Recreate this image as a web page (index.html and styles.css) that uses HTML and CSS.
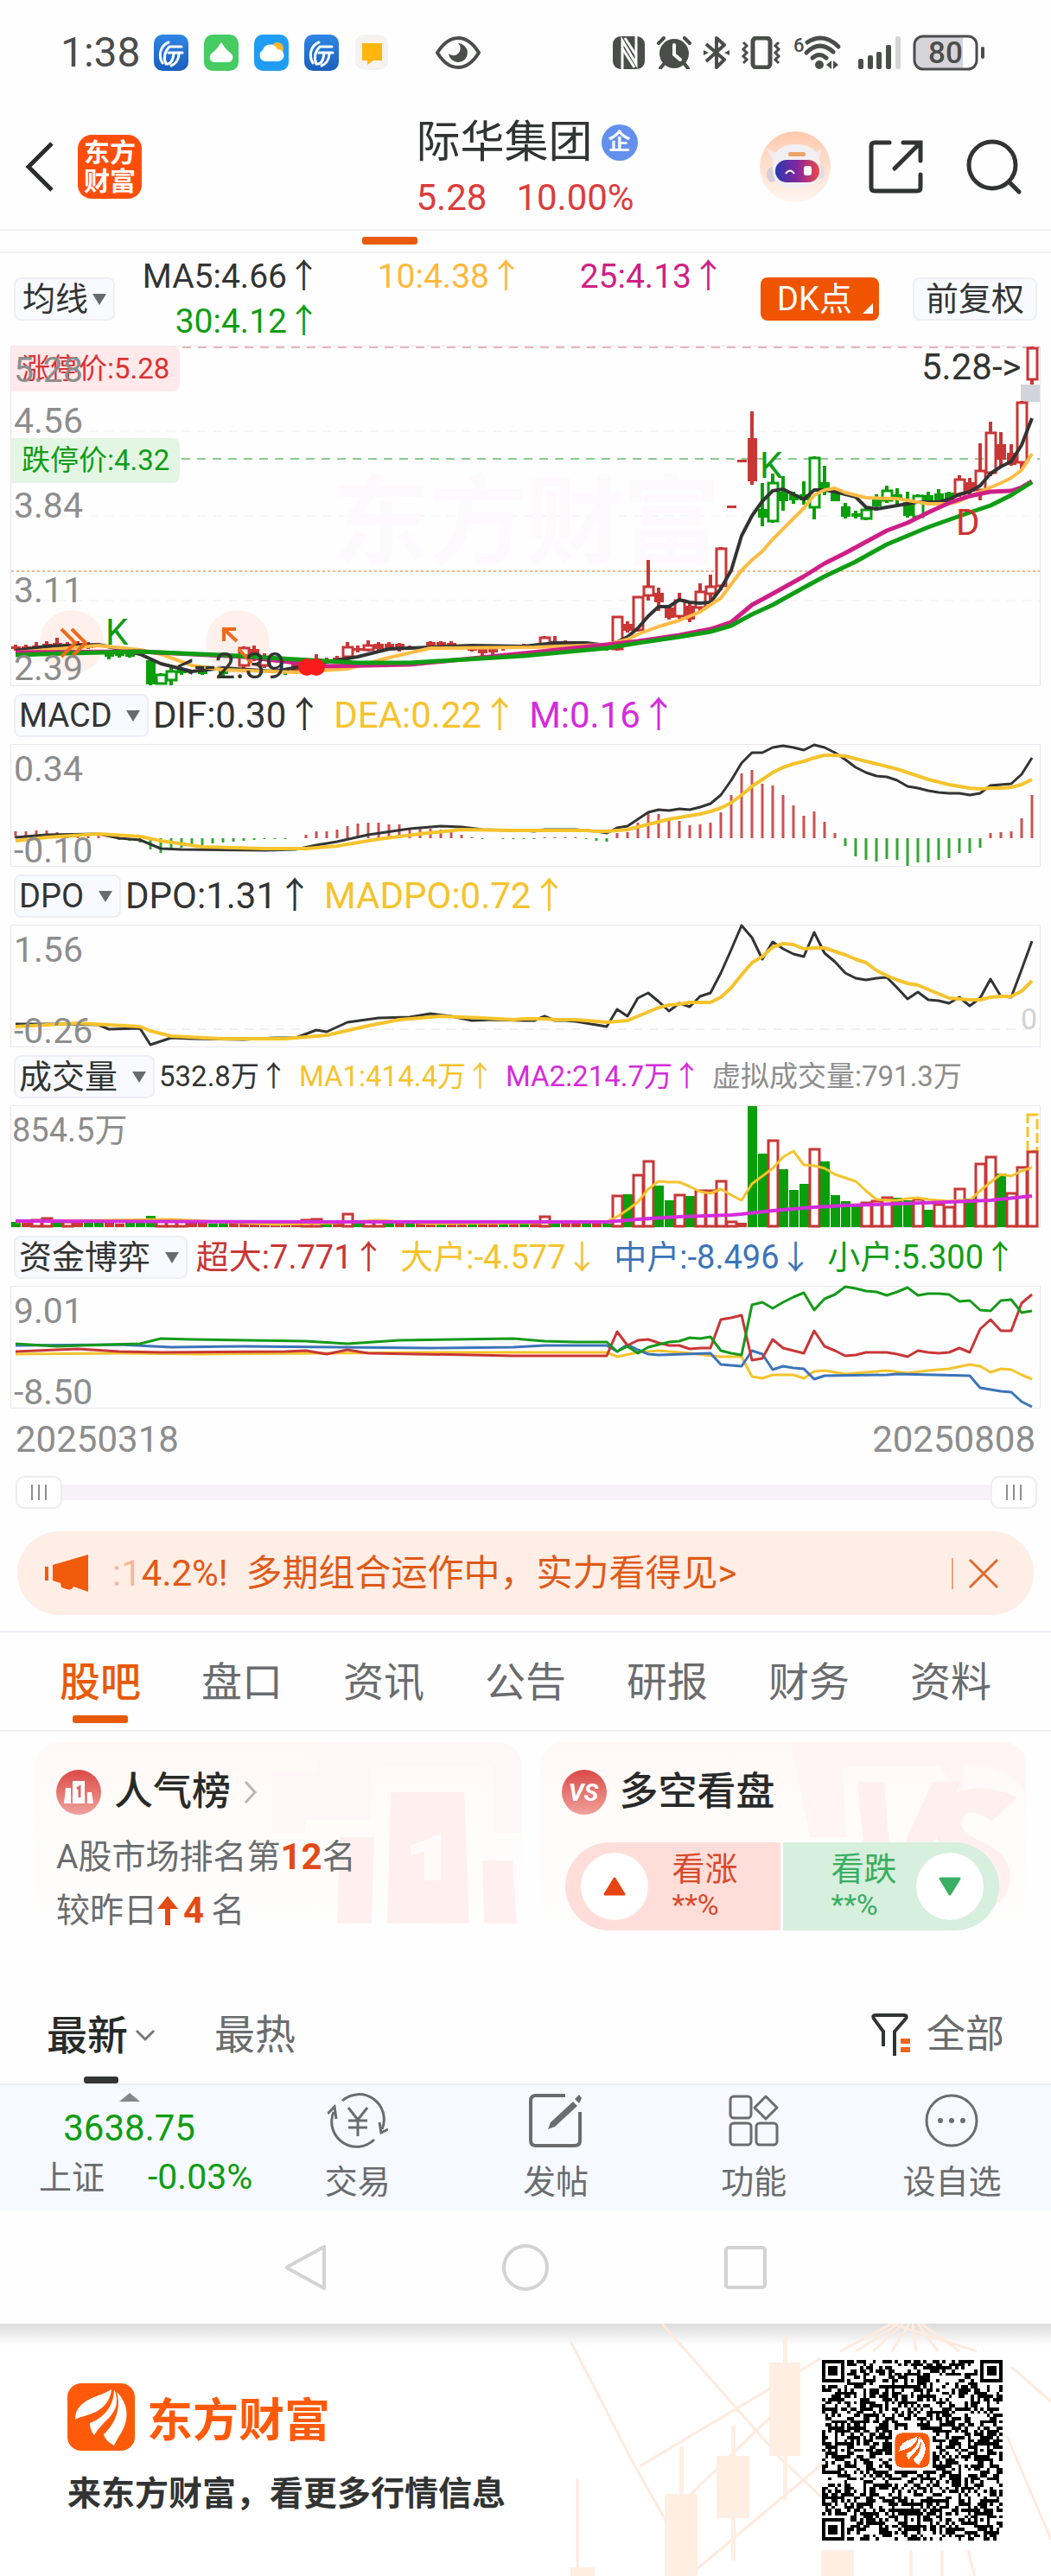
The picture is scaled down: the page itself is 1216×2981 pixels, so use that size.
FILE: index.html
```html
<!DOCTYPE html>
<html lang="zh-CN">
<head>
    <meta charset="UTF-8">
    <meta name="viewport" content="width=device-width, initial-scale=1.0">
    <title>际华集团 5.28 10.00%</title>
    <link rel="stylesheet" href="styles.css">
</head>
<body>

    <!-- shared logo mark -->
    <svg class="defs" width="0" height="0">
        <symbol id="logo" viewBox="0 0 78 78">
            <rect width="78" height="78" rx="16" fill="#ff5a0a"/>
            <path fill="#fff" d="M9 42C9 26 22 19 36 14C44 11 50 8 51 7C50 18 44 27 33 33C22 38 13 39 9 42Z"/>
            <path fill="#fff" d="M54 7C60 20 57 32 46 42C40 48 35 53 31 60C27 55 26 50 26 46C40 41 54 28 54 7Z"/>
            <path fill="#fff" d="M57 10C66 19 70 30 68 42C66 54 59 61 54 72C47 68 43 64 42 59C54 48 63 30 57 10Z"/>
        </symbol>
        <symbol id="bank" viewBox="0 0 40 42">
            <linearGradient id="bankBg" x1="0" y1="0" x2="0" y2="1"><stop offset="0" stop-color="#2f86e4"/><stop offset="1" stop-color="#1a5fbd"/></linearGradient>
            <rect width="40" height="42" rx="10" fill="url(#bankBg)"/>
            <g fill="none" stroke="#fff" stroke-width="3" stroke-linecap="round">
                <path d="M17 9C7 13 5 25 10 33"/><path d="M19 14H32"/><path d="M17 21H33"/><path d="M18 14C12 20 11 28 14 34C20 35 22 29 23 22"/><path d="M29 22C29 29 25 34 20 36"/>
            </g>
        </symbol>
    </svg>

    <div class="status">
        <span class="clock">1:38</span>
        <svg width="40" height="42"><use href="#bank"/></svg>
        <svg width="40" height="42" viewBox="0 0 40 42"><rect width="40" height="42" rx="10" fill="#46cc62"/><path fill="#fff" d="M20 9C23 13 25 17 29 20C36 24 34 32 27 32H13C6 32 4 24 11 20C15 17 17 13 20 9Z"/></svg>
        <svg width="40" height="42" viewBox="0 0 40 42"><rect width="40" height="42" rx="10" fill="#1f9df5"/><circle cx="27" cy="16" r="7" fill="#ffb62b"/><path fill="#fff" d="M13 31A7 7 0 0 1 10 18A9 9 0 0 1 27 17A7 7 0 0 1 28 31Z"/></svg>
        <svg width="40" height="42"><use href="#bank"/></svg>
        <svg width="40" height="42" viewBox="0 0 40 42"><rect width="38" height="41" x="1" rx="10" fill="#f6f2f2"/><path fill="#ffb60f" d="M9 10H32V30H22L15 35V30H9Z"/></svg>
        <svg class="eye" width="52" height="38" viewBox="0 0 52 38"><path d="M2 19C10 6 18 2 26 2S42 6 50 19C42 32 34 36 26 36S10 32 2 19Z" fill="none" stroke="#4b4d4b" stroke-width="4"/><path d="M26 8A11 11 0 1 1 15 20A8 8 0 0 0 26 8Z" fill="#4b4d4b"/></svg>
        <div class="status-right">
            <svg width="37" height="38" viewBox="0 0 37 38"><rect width="37" height="38" rx="9" fill="#4b4d4b"/><path d="M11 38V5L27 32V0" fill="none" stroke="#fff" stroke-width="3"/><path d="M11 14L25 36" stroke="#fff" stroke-width="3"/><path d="M14 2L27 22" stroke="#fff" stroke-width="3"/></svg>
            <svg width="42" height="38" viewBox="0 0 42 38"><circle cx="21" cy="20" r="17" fill="#4b4d4b"/><path d="M3 8L9 2M39 8L33 2M9 32L5 37M33 32L37 37" stroke="#4b4d4b" stroke-width="4" stroke-linecap="round"/><path d="M21 10V21L28 27" fill="none" stroke="#fff" stroke-width="4" stroke-linecap="round"/></svg>
            <svg width="30" height="38" viewBox="0 0 30 38"><path d="M3 9L24 27L15 36V2L24 10L3 29" fill="none" stroke="#4b4d4b" stroke-width="4" stroke-linejoin="round"/><path d="M0 16L6 19L0 22ZM30 16L24 19L30 22Z" fill="#4b4d4b"/></svg>
            <svg width="48" height="38" viewBox="0 0 48 38"><g fill="none" stroke="#4b4d4b"><rect x="14" y="2" width="20" height="34" rx="4" stroke-width="5"/><path d="M3 7L7 11L3 15L7 19L3 23L7 27L3 31M44 7L40 11L44 15L40 19L44 23L40 27L44 31" stroke-width="3"/></g></svg>
            <svg class="wifi" width="56" height="42" viewBox="0 0 56 42"><text x="0" y="20" font-size="22" font-weight="500" fill="#4b4d4b">6</text><g fill="none" stroke="#4b4d4b" stroke-width="5" stroke-linecap="round"><path d="M16 9Q35 -3 52 14"/><path d="M15 21Q30 6 46 20"/><path d="M22 27Q30 20 38 27"/></g><circle cx="30" cy="35" r="5" fill="#4b4d4b"/><path d="M44 30V40L38 35ZM46 30V40L52 35Z" fill="#4b4d4b"/></svg>
            <svg class="signal" width="50" height="38" viewBox="0 0 50 38"><g fill="#4b4d4b"><rect y="26" width="6" height="12" rx="2"/><rect x="11" y="22" width="6" height="16" rx="2"/><rect x="21" y="18" width="6" height="20" rx="2"/><rect x="32" y="10" width="6" height="28" rx="2"/></g><rect x="43" width="6" height="38" rx="2" fill="#d6d2d6"/></svg>
            <svg width="84" height="42" viewBox="0 0 84 42"><rect x="2" y="2" width="72" height="38" rx="10" fill="#fff"/><path d="M12 2H58V40H12A10 10 0 0 1 2 30V12A10 10 0 0 1 12 2Z" fill="#d6d4d8"/><rect x="2" y="2" width="72" height="38" rx="10" fill="none" stroke="#4b4d4b" stroke-width="3"/><rect x="79" y="14" width="4" height="14" rx="2" fill="#4b4d4b"/><text x="38" y="33" font-size="35" font-weight="500" text-anchor="middle" fill="#4b4d4b">80</text></svg>
        </div>
    </div>

    <header class="topbar">
        <div class="top-left">
            <button class="icon-btn" aria-label="返回"><svg width="36" height="62" viewBox="0 0 36 62"><path d="M32 4L5 31L32 58" fill="none" stroke="#2b2d2c" stroke-width="5"/></svg></button>
            <a class="brand" href="#">东方<br>财富</a>
        </div>
        <div class="stock">
            <h1>际华集团<span class="badge">企</span></h1>
            <p><span>5.28</span><span>10.00%</span></p>
        </div>
        <div class="top-right">
            <button class="icon-btn" aria-label="助手">
                <svg width="82" height="82" viewBox="0 0 82 82">
                    <linearGradient id="botBg" x1="0" y1="0" x2="0" y2="1"><stop offset="0" stop-color="#ffc9ad"/><stop offset="1" stop-color="#fff6f1"/></linearGradient>
                    <linearGradient id="visor"><stop offset="0" stop-color="#2b39b0"/><stop offset=".5" stop-color="#84269c"/><stop offset="1" stop-color="#ec4848"/></linearGradient>
                    <circle cx="41" cy="41" r="41" fill="url(#botBg)"/>
                    <path d="M15 34L8 20L22 26ZM62 26L72 20L68 34Z" fill="#f3eaf0"/>
                    <ellipse cx="14" cy="50" rx="6" ry="9" fill="#d8cfd6"/><ellipse cx="71" cy="47" rx="4" ry="8" fill="#e5dbe2"/>
                    <path d="M15 42C14 22 26 15 42 15S70 22 70 40C72 58 62 66 42 66S15 58 15 42Z" fill="#f2eff2"/>
                    <rect x="33" y="24" width="20" height="5" rx="2" fill="#eaa468"/>
                    <rect x="18" y="33" width="51" height="26" rx="13" fill="url(#visor)"/>
                    <path d="M30 49Q35 42 40 49" fill="none" stroke="#fff" stroke-width="2"/><rect x="51" y="40" width="9" height="11" rx="3" fill="#fff"/>
                </svg>
            </button>
            <button class="icon-btn" aria-label="分享"><svg width="64" height="64" viewBox="0 0 64 64"><g fill="none" stroke="#323433" stroke-width="5" stroke-linecap="round"><path d="M24 4H7Q3 4 3 8V56Q3 60 7 60H56Q60 60 60 56V41"/><path d="M40 4H60V25M59 5L30 34"/></g></svg></button>
            <button class="icon-btn search" aria-label="搜索"><svg width="66" height="66" viewBox="0 0 66 66"><g fill="none" stroke="#323433" stroke-width="5" stroke-linecap="round"><circle cx="31" cy="31" r="27"/><path d="M51 51L62 62"/></g></svg></button>
        </div>
    </header>
    <div class="strip"><i></i></div>

    <main class="charts">
        <div class="ma-row">
            <div class="pick pick-tight"><select aria-label="指标"><option>均线</option></select></div>
            <div class="ma-values">
                <span class="c-black">MA5:4.66↑</span>
                <span class="c-orange">10:4.38↑</span>
                <span class="c-pink">25:4.13↑</span>
                <span class="c-green">30:4.12↑</span>
            </div>
            <button class="dk">DK点</button>
            <button class="adjust">前复权</button>
        </div>

        <div class="chart">
            <svg viewBox="0 0 1190 392">
                <g stroke="#f1edf3" stroke-dasharray="10 8"><path d="M0 98H1190M0 196H1190M0 294H1190"/></g>
                <text x="372" y="243" font-size="112" font-weight="700" fill="#fdf9fd">东方财富</text>
                <path d="M0 1H1190" stroke="#e7b6be" stroke-width="2" stroke-dasharray="10 8"/>
                <path d="M197 130H1190" stroke="#8acb8f" stroke-width="2" stroke-dasharray="10 8"/>
                <path d="M0 260H1190" stroke="#eeb892" stroke-width="2" stroke-dasharray="3 3"/>
                <circle cx="70" cy="342" r="37" fill="#fff0eb"/>
                <circle cx="262" cy="342" r="37" fill="#fff0eb"/>
                <rect x="1168" y="44" width="22" height="20" fill="#d3d3dc"/>
                <g id="candles"></g>
                <g id="kLines"></g>
                <g fill="none" stroke="#ef6a1c" stroke-width="4"><path d="M58 327L74 343L58 359M70 327L86 343L70 359"/><path d="M246 341V327H260M247 328L261 341M263 350L278 366"/></g>
                <circle cx="342" cy="371" r="10" fill="#f81c1c"/><circle cx="353" cy="371" r="10" fill="#f81c1c"/>
                <g font-size="42">
                    <text x="109" y="345" fill="#0f9d14">K</text>
                    <text x="866" y="152" fill="#0f9d14">K</text>
                    <text x="1093" y="218" fill="#cf3232">D</text>
                    <text x="1053" y="38" fill="#323433">5.28-&gt;</text>
                    <text x="191" y="384" fill="#323433">&lt;--2.39</text>
                </g>
            </svg>
            <span class="limit limit-up">涨停价:5.28</span>
            <span class="limit limit-down">跌停价:4.32</span>
            <div class="scale price-scale"><span>5.28</span><span>4.56</span><span>3.84</span><span>3.11</span><span>2.39</span></div>
        </div>

        <div class="ind-row">
            <div class="pick"><select aria-label="副图一"><option>MACD</option></select></div>
            <span class="c-black">DIF:0.30↑</span>
            <span class="c-yellow">DEA:0.22↑</span>
            <span class="c-violet">M:0.16↑</span>
        </div>
        <div class="chart">
            <svg viewBox="0 0 1190 140"><g id="macd"></g></svg>
            <div class="scale"><span>0.34</span><span>-0.10</span></div>
        </div>

        <div class="ind-row">
            <div class="pick"><select aria-label="副图二"><option>DPO</option></select></div>
            <span class="c-black">DPO:1.31↑</span>
            <span class="c-yellow">MADPO:0.72↑</span>
        </div>
        <div class="chart">
            <svg viewBox="0 0 1190 140">
                <path d="M0 120H1190" stroke="#e6e0e4" stroke-dasharray="10 8"/>
                <g id="dpo"></g>
                <text x="1168" y="120" font-size="34" fill="#d3d1d4">0</text>
            </svg>
            <div class="scale"><span>1.56</span><span>-0.26</span></div>
        </div>

        <div class="ind-row volume-row">
            <div class="pick"><select aria-label="副图三"><option>成交量</option></select></div>
            <span class="c-black">532.8万↑</span>
            <span class="c-yellow">MA1:414.4万↑</span>
            <span class="c-violet">MA2:214.7万↑</span>
            <span class="c-grey">虚拟成交量:791.3万</span>
        </div>
        <div class="chart">
            <svg viewBox="0 0 1190 140"><g id="volume"></g></svg>
            <div class="scale volume-scale"><span>854.5万</span></div>
        </div>

        <div class="ind-row fund-row">
            <div class="pick"><select aria-label="副图四"><option>资金博弈</option></select></div>
            <span class="c-red">超大:7.771↑</span>
            <span class="c-yellow">大户:-4.577↓</span>
            <span class="c-blue">中户:-8.496↓</span>
            <span class="c-green">小户:5.300↑</span>
        </div>
        <div class="chart">
            <svg viewBox="0 0 1190 140"><g id="fund"></g></svg>
            <div class="scale"><span>9.01</span><span>-8.50</span></div>
        </div>

        <div class="dates"><span>20250318</span><span>20250808</span></div>
        <div class="range">
            <input type="range" min="0" max="98" value="0" aria-label="开始日期">
            <input type="range" min="0" max="98" value="98" aria-label="结束日期">
        </div>
    </main>

    <div class="notice">
        <svg width="52" height="44" viewBox="0 0 52 44"><path d="M2 14V30" stroke="#f25a0c" stroke-width="4"/><path d="M9 12L50 0V43L33 37Q31 42 25 40L19 38L18 33L9 30Z" fill="#f25a0c"/></svg>
        <a href="#"><span class="fade">:1</span>4.2%!&nbsp; 多期组合运作中，实力看得见&gt;</a>
        <button class="icon-btn" aria-label="关闭"><svg width="36" height="36" viewBox="0 0 36 36"><path d="M2 2L34 34M34 2L2 34" stroke="#e06a2c" stroke-width="3"/></svg></button>
    </div>

    <nav class="tabs">
        <a class="active" href="#">股吧</a>
        <a href="#">盘口</a>
        <a href="#">资讯</a>
        <a href="#">公告</a>
        <a href="#">研报</a>
        <a href="#">财务</a>
        <a href="#">资料</a>
    </nav>

    <section class="cards">
        <div class="card">
            <svg class="card-art" width="320" height="210" viewBox="0 0 320 210">
                <path d="M32 34H84V0H290Q320 0 320 30V105H288V27H146V90H70V105H32Z" fill="#fff6f7"/>
                <g fill="#fff0ef"><path d="M110 110H150L147 210H107Z"/><path d="M169 58H254L260 210H165Z"/><path d="M275 137H310L315 210H277Z"/></g>
                <path d="M192 120L227 106V160H208V126L192 132Z" fill="#fffafa"/>
            </svg>
            <h2>
                <svg width="52" height="52" viewBox="0 0 52 52">
                    <linearGradient id="redBg" x1="0" y1="0" x2="0" y2="1"><stop offset="0" stop-color="#dc4a46"/><stop offset="1" stop-color="#f0a19c"/></linearGradient>
                    <circle cx="26" cy="26" r="26" fill="url(#redBg)"/>
                    <path d="M11 21H17V39H9ZM19 13H33V39H19ZM36 26H41L43 39H36Z" fill="#fff"/><path d="M24 22L27 20V32" fill="none" stroke="#dc6864" stroke-width="3"/>
                </svg>
                人气榜
                <svg width="16" height="28" viewBox="0 0 16 28"><path d="M2 2L13 14L2 26" fill="none" stroke="#b9b7b6" stroke-width="3"/></svg>
            </h2>
            <p>A股市场排名第<b>12</b>名</p>
            <p>较昨日<svg width="24" height="34" viewBox="0 0 24 34"><path d="M12 0L24 15H15V34H9V15H0Z" fill="#e24a16"/></svg><b class="up">4</b>名</p>
        </div>
        <div class="card">
            <svg class="card-art" width="320" height="210" viewBox="0 0 320 210">
                <path d="M48 0H290Q320 0 320 30V60Q295 20 250 28L245 60L220 28H108L112 110H70Z" fill="#fff5f4"/>
                <path d="M125 46H156L164 150L212 46H245L175 200H140ZM310 64L280 92Q252 70 245 92Q245 106 275 118Q312 138 298 175Q275 210 220 190L232 160Q262 178 268 158Q268 148 240 135Q206 118 218 80Q245 36 310 64Z" fill="#fff0ef"/>
            </svg>
            <h2>
                <svg width="52" height="52" viewBox="0 0 52 52"><circle cx="26" cy="26" r="26" fill="url(#redBg)"/><text x="25" y="36" font-size="28" font-weight="700" font-style="italic" text-anchor="middle" fill="#fff">VS</text></svg>
                多空看盘
            </h2>
            <div class="vote">
                <button class="bull">
                    <span class="dot"><svg width="26" height="22" viewBox="0 0 26 22"><path d="M13 2L24 20H2Z" fill="#e54512" stroke="#e54512" stroke-width="3" stroke-linejoin="round"/></svg></span>
                    <span>看涨<br><small>**%</small></span>
                </button>
                <button class="bear">
                    <span>看跌<br><small>**%</small></span>
                    <span class="dot"><svg width="26" height="22" viewBox="0 0 26 22"><path d="M13 20L24 2H2Z" fill="#3aae62" stroke="#3aae62" stroke-width="3" stroke-linejoin="round"/></svg></span>
                </button>
            </div>
        </div>
    </section>

    <div class="sort">
        <a class="active" href="#">最新<svg width="24" height="16" viewBox="0 0 24 16"><path d="M2 2L12 12L22 2" fill="none" stroke="#777" stroke-width="3"/></svg></a>
        <a href="#">最热</a>
        <button class="filter">
            <svg width="48" height="52" viewBox="0 0 48 52"><path d="M14 39V22L3 7Q1 3 5 3H38Q42 3 40 7L27 22V50" fill="none" stroke="#323433" stroke-width="4"/><path d="M34 33H45M34 43H45" stroke="#f0631c" stroke-width="6"/></svg>
            全部
        </button>
    </div>

    <nav class="bottom">
        <a class="index" href="#">
            <svg width="24" height="10" viewBox="0 0 24 10"><path d="M12 0L24 10H0Z" fill="#85868a"/></svg>
            <strong>3638.75</strong>
            <span>上证<em>-0.03%</em></span>
        </a>
        <a href="#">
            <svg width="70" height="64" viewBox="0 0 70 64"><g fill="none" stroke="#6a6c6e" stroke-width="3"><path d="M17 9A29 29 0 0 1 63 42M54 54A29 29 0 0 1 7 22"/><path d="M0 24L8 16L10 30M70 42L62 46L60 34M24 17L35 31L46 17M35 31V50M24 32H46M24 40H46"/></g></svg>
            交易
        </a>
        <a href="#">
            <svg width="62" height="64" viewBox="0 0 62 64"><g fill="none" stroke="#6a6c6e" stroke-width="4"><path d="M42 3H8Q2 3 2 9V55Q2 61 8 61H53Q59 61 59 55V22"/></g><path d="M51 10L56 15L30 39L22 42L25 34ZM53 7L58 2L61 6L58 12Z" fill="#6a6c6e"/></svg>
            发帖
        </a>
        <a href="#">
            <svg width="60" height="64" viewBox="0 0 60 64"><g fill="none" stroke="#6a6c6e" stroke-width="3"><rect x="3" y="4" width="24" height="25" rx="4"/><rect x="3" y="35" width="24" height="25" rx="4"/><rect x="33" y="35" width="24" height="25" rx="4"/><path d="M44 4L57 17L44 30L31 17Z" stroke-linejoin="round"/></g></svg>
            功能
        </a>
        <a href="#">
            <svg width="64" height="64" viewBox="0 0 64 64"><circle cx="32" cy="32" r="29" fill="none" stroke="#6a6c6e" stroke-width="3"/><g fill="#6a6c6e"><circle cx="19" cy="32" r="3"/><circle cx="32" cy="32" r="3"/><circle cx="45" cy="32" r="3"/></g></svg>
            设自选
        </a>
    </nav>

    <div class="system-nav">
        <button class="icon-btn" aria-label="后退"><svg width="52" height="56" viewBox="0 0 52 56"><path d="M47 4V52L5 29Q3 28 5 27Z" fill="none" stroke="#d4d2d4" stroke-width="4" stroke-linejoin="round"/></svg></button>
        <button class="icon-btn" aria-label="主页"><svg width="56" height="56" viewBox="0 0 56 56"><circle cx="28" cy="28" r="25" fill="none" stroke="#d4d2d4" stroke-width="4"/></svg></button>
        <button class="icon-btn" aria-label="最近"><svg width="52" height="56" viewBox="0 0 52 56"><rect x="4" y="5" width="45" height="46" rx="3" fill="none" stroke="#d4d2d4" stroke-width="4"/></svg></button>
    </div>

    <footer class="promo">
        <svg class="promo-art" width="556" height="293" viewBox="0 0 556 293">
            <g fill="none" stroke="#ffeadd" stroke-width="3"><path d="M106 0L245 158L290 200M0 20L72 160L108 224M80 165L290 40M108 228L260 80M145 285L330 130M8 293V180M312 32L372 0L470 32M330 32L380 0M350 32L385 0M372 32L392 0M400 32L396 0M425 32L402 0M450 32L406 0M510 50L556 90M505 130L556 250M394 262V293M430 262V293M460 262L468 293"/></g>
            <g fill="#ffeee2"><rect x="230" y="45" width="36" height="108"/><rect x="246" y="14" width="5" height="190"/><rect x="169" y="153" width="38" height="72"/><rect x="186" y="118" width="5" height="156"/><rect x="109" y="197" width="38" height="96"/><rect x="126" y="142" width="5" height="60"/><rect x="290" y="262" width="38" height="31"/><rect y="282" width="28" height="11"/></g>
        </svg>
        <div class="promo-text">
            <div class="promo-brand"><svg width="78" height="78"><use href="#logo"/></svg>东方财富</div>
            <p>来东方财富，看更多行情信息</p>
        </div>
        <svg class="qr" viewBox="0 0 57 57" shape-rendering="crispEdges">
            <rect width="57" height="57" fill="#fff"/>
            <path id="qr" fill="#000"/>
            <rect x="22" y="22" width="13" height="13" fill="#fff"/>
            <use href="#logo" x="23" y="23" width="11" height="11"/>
        </svg>
    </footer>

    <script src="script.js"></script>
</body>
</html>
```
FILE: styles.css
```css
* {
    box-sizing: border-box;
}

body {
    margin: 0;
    background-color: #fefefe;
    color: #323433;
    font-family: Roboto, "Noto Sans CJK SC", sans-serif;
    font-size: 38px;
}

h1, h2, p {
    margin: 0;
    font-weight: 400;
}

a {
    color: inherit;
    text-decoration: none;
}

button, select {
    border: none;
    padding: 0;
    background: none;
    color: inherit;
    font: inherit;
    cursor: pointer;
}

svg {
    display: block;
    flex: none;
}

.defs {
    position: absolute;
}

.icon-btn {
    display: flex;
}

/* colours of the indicator values */
.c-black { color: #323433; }
.c-orange { color: #ffb83c; }
.c-yellow { color: #f5c32c; }
.c-pink { color: #cf1f86; }
.c-violet { color: #d42bdc; }
.c-green { color: #0f9d14; }
.c-red { color: #c93636; }
.c-blue { color: #3b74b9; }
.c-grey { color: #8d8d8d; }

/* phone status bar */
.status {
    display: flex;
    align-items: center;
    gap: 18px;
    padding: 36px 76px 34px 70px;
}

.clock {
    color: #4b4d4b;
    font-size: 48px;
    line-height: 50px;
    margin-right: -3px;
}

.eye {
    margin-left: 36px;
}

.status-right {
    display: flex;
    align-items: center;
    gap: 13px;
    margin-left: auto;
}

.wifi {
    overflow: visible;
}

.signal {
    margin-left: 6px;
}

/* title bar */
.topbar {
    display: grid;
    grid-template-columns: 1fr auto 1fr;
    align-items: center;
    padding: 15px 33px 14px 28px;
    border-bottom: 2px solid #f0f0f5;
}

.top-left, .top-right {
    display: flex;
    align-items: center;
    gap: 26px;
}

.top-right {
    justify-content: flex-end;
    gap: 44px;
}

.search {
    margin-left: 4px;
}

.brand {
    width: 74px;
    height: 74px;
    padding-top: 4px;
    border-radius: 16px;
    background-color: #ff4e0c;
    color: #fff;
    font-size: 30px;
    font-weight: 700;
    line-height: 33px;
    text-align: center;
}

.stock {
    display: flex;
    flex-direction: column;
    gap: 12px;
    margin-left: 8px;
}

.stock h1 {
    display: flex;
    align-items: center;
    gap: 10px;
    font-size: 51px;
    line-height: 60px;
}

.badge {
    width: 42px;
    height: 42px;
    border-radius: 50%;
    background-color: #6290ec;
    color: #fff;
    font-size: 26px;
    font-weight: 700;
    line-height: 40px;
    text-align: center;
}

.stock p {
    display: flex;
    gap: 34px;
    color: #dc3c3c;
    font-size: 42px;
    line-height: 44px;
}

.strip {
    padding: 7px 0 8px;
    border-bottom: 2px solid #f0f0f5;
}

.strip i {
    display: block;
    width: 64px;
    height: 9px;
    margin-left: 419px;
    border-radius: 3px;
    background-color: #e85a0a;
}

/* charts */
.charts {
    padding: 0 12px;
}

.ma-row {
    display: flex;
    align-items: center;
    padding: 1px 4px 2px;
}

.pick {
    position: relative;
}

.pick::after {
    content: "";
    position: absolute;
    right: 10px;
    top: 19px;
    border: 8px solid transparent;
    border-top: 13px solid #696b6b;
    border-bottom: none;
    pointer-events: none;
}

.pick select {
    appearance: none;
    height: 50px;
    padding: 0 40px 0 4px;
    border: 2px solid #eeeef6;
    border-radius: 8px;
    background-color: #f8faff;
    line-height: 46px;
}

.pick-tight select {
    padding: 0 28px 0 8px;
}

.ma-values {
    display: grid;
    grid-template-columns: repeat(3, 234px);
    margin-left: 4px;
    font-size: 39px;
    line-height: 52px;
    text-align: right;
}

.dk, .adjust {
    height: 50px;
    border-radius: 8px;
    line-height: 46px;
}

.dk {
    position: relative;
    width: 137px;
    margin-left: auto;
    padding-right: 12px;
    background-color: #f05400;
    color: #fff;
}

.dk::after {
    content: "";
    position: absolute;
    right: 7px;
    bottom: 8px;
    border-left: 12px solid transparent;
    border-bottom: 12px solid #fff;
}

.adjust {
    width: 144px;
    margin-left: 39px;
    border: 2px solid #eeeef6;
    background-color: #f8faff;
}

.chart {
    position: relative;
    border: 1px solid #ebe6ec;
}

.chart svg {
    width: 100%;
    height: auto;
    overflow: visible;
}

.scale {
    position: absolute;
    top: 6px;
    bottom: -4px;
    left: 3px;
    display: flex;
    flex-direction: column;
    justify-content: space-between;
    color: #8d8d8d;
    font-size: 41px;
    line-height: 44px;
}

.price-scale {
    display: grid;
    top: 0;
    bottom: 0;
    grid-template-rows: 12% 15% 25% 25% 23%;
    align-items: end;
    line-height: 40px;
}

.volume-scale {
    left: 1px;
    font-size: 38px;
}

.limit {
    position: absolute;
    left: 0;
    padding: 0 12px;
    border-radius: 0 8px 8px 0;
    font-size: 33px;
    line-height: 52px;
}

.limit-up {
    top: 0;
    background-color: #ffe9ea;
    color: #dc3232;
}

.limit-down {
    top: 27%;
    background-color: #e3f6e3;
    color: #0f9d14;
}

.ind-row {
    display: flex;
    align-items: center;
    gap: 13px;
    padding: 9px 4px 8px;
    font-size: 42px;
    line-height: 50px;
    white-space: nowrap;
}

.ind-row .pick {
    margin-right: -8px;
    font-size: 38px;
}

.volume-row {
    font-size: 33px;
}

.fund-row {
    justify-content: space-between;
    padding-right: 28px;
    font-size: 38px;
}

.dates {
    display: flex;
    justify-content: space-between;
    padding: 0 6px;
    color: #8d8d8d;
    font-size: 42px;
    line-height: 72px;
}

.range {
    display: grid;
    align-items: center;
    margin: 7px 4px 0 6px;
    border-radius: 9px;
    background: linear-gradient(#f6f2f7, #f6f2f7) center / 100% 18px no-repeat;
}

.range input {
    grid-area: 1 / 1;
    width: 100%;
    height: 36px;
    margin: 0;
    appearance: none;
    background: none;
    pointer-events: none;
}

.range input::-webkit-slider-thumb {
    appearance: none;
    width: 54px;
    height: 38px;
    border: 2px solid #f0ebf1;
    border-radius: 10px;
    background:
        linear-gradient(#8d8d8d, #8d8d8d) 16px center / 2px 18px no-repeat,
        linear-gradient(#8d8d8d, #8d8d8d) 24px center / 2px 18px no-repeat,
        linear-gradient(#8d8d8d, #8d8d8d) 32px center / 2px 18px no-repeat,
        #fff;
    pointer-events: auto;
}

/* notice */
.notice {
    display: flex;
    align-items: center;
    margin: 27px 20px 18px;
    padding: 0 40px 0 32px;
    border-radius: 49px;
    background-color: #ffeee6;
    color: #df5a17;
    font-size: 42px;
    line-height: 97px;
}

.notice a {
    flex: 1;
    margin-left: 26px;
}

.notice .fade {
    opacity: 0.35;
}

.notice .icon-btn {
    padding-left: 17px;
    border-left: 2px solid #e9a27d;
}

/* page tabs */
.tabs {
    display: flex;
    padding: 28px 34px 0;
    border-top: 2px solid #f0f0f5;
    border-bottom: 2px solid #f0f0f5;
    color: #6a6c6e;
    font-size: 47px;
    line-height: 60px;
}

.tabs a {
    flex: 1;
    padding-bottom: 25px;
    text-align: center;
}

.tabs .active {
    padding-bottom: 8px;
    color: #e85a0a;
    font-weight: 500;
}

.tabs .active::after {
    content: "";
    display: block;
    width: 64px;
    height: 9px;
    margin: 8px auto 0;
    border-radius: 3px;
    background-color: #e85a0a;
}

/* cards */
.cards {
    display: grid;
    grid-template-columns: 1fr 1fr;
    gap: 22px;
    padding: 12px 29px 0 40px;
}

.card {
    position: relative;
    height: 220px;
    padding: 28px 25px 0;
    border-radius: 28px;
    background: linear-gradient(#fff8f7, #fffcf9 40%, #fefefe);
    color: #6a6c6e;
    font-size: 39px;
}

.card-art {
    position: absolute;
    top: 0;
    right: 0;
}

.card h2, .card p, .vote {
    position: relative;
}

.card h2 {
    display: flex;
    align-items: center;
    gap: 15px;
    margin-bottom: 14px;
    color: #282a29;
    font-size: 45px;
    font-weight: 500;
    line-height: 60px;
}

.card p {
    display: flex;
    align-items: center;
    line-height: 62px;
}

.card b {
    color: #e24a16;
    font-size: 42px;
}

.card .up {
    margin: 0 8px 0 6px;
}

.vote {
    display: grid;
    grid-template-columns: 1fr 1fr;
    gap: 3px;
    margin: 0 0 0 4px;
    width: 502px;
    border-radius: 52px;
    overflow: hidden;
}

.card h2 + .vote {
    margin-top: 28px;
}

.vote button {
    display: flex;
    align-items: center;
    gap: 28px;
    height: 102px;
    padding: 0 18px;
    font-size: 38px;
    line-height: 40px;
    text-align: left;
}

.vote small {
    font-size: 34px;
}

.bull {
    background-color: #ffdeda;
    color: #d84a2c;
}

.vote .bear {
    gap: 22px;
    justify-content: flex-end;
    background-color: #d7efdd;
    color: #3aae62;
}

.dot {
    display: flex;
    align-items: center;
    justify-content: center;
    width: 78px;
    height: 78px;
    border-radius: 50%;
    background-color: #fff;
}

/* list sorting */
.sort {
    display: flex;
    gap: 68px;
    padding: 89px 54px 0;
    border-bottom: 2px solid #f0f0f2;
    color: #6a6c6e;
    font-size: 47px;
    line-height: 60px;
}

.sort a {
    padding-bottom: 26px;
}

.sort .active {
    display: grid;
    grid-template-columns: auto auto;
    align-items: center;
    column-gap: 8px;
    padding-bottom: 0;
    color: #282a29;
    font-weight: 500;
}

.sort .active::after {
    content: "";
    grid-column: 1 / 3;
    justify-self: center;
    width: 40px;
    height: 8px;
    margin-top: 16px;
    border-radius: 3px;
    background-color: #323433;
}

.filter {
    display: flex;
    align-items: center;
    gap: 16px;
    height: 60px;
    margin-left: auto;
    font-size: 45px;
}

/* bottom bar */
.bottom {
    display: grid;
    grid-template-columns: 299fr 229fr 229fr 229fr 229fr;
    background-color: #f6f9ff;
    color: #6a6c6e;
    line-height: 50px;
}

.bottom a {
    display: flex;
    flex-direction: column;
    align-items: center;
    gap: 14px;
    padding: 9px 0 8px;
}

.bottom .index {
    gap: 6px;
}

.bottom strong {
    color: #0f9d14;
    font-size: 42px;
    font-weight: 400;
}

.bottom em {
    margin-left: 50px;
    color: #0f9d14;
    font-size: 41px;
    font-style: normal;
}

.bottom .index span {
    padding-left: 38px;
}

.system-nav {
    display: flex;
    justify-content: center;
    gap: 200px;
    padding: 38px 0 37px;
}

/* promo footer */
.promo {
    position: relative;
    display: flex;
    align-items: center;
    justify-content: space-between;
    padding: 42px 56px 42px 78px;
    background: linear-gradient(#dcdcdc, #fff 26px);
}

.promo-art {
    position: absolute;
    top: 0;
    right: 0;
}

.promo-text {
    position: relative;
}

.promo-brand {
    display: flex;
    align-items: center;
    gap: 14px;
    margin-bottom: 22px;
    color: #ff5a0a;
    font-size: 53px;
    font-weight: 700;
}

.promo p {
    font-size: 39px;
    font-weight: 700;
    line-height: 56px;
}

.qr {
    position: relative;
    width: 209px;
}
```
FILE: script.js
```js
var RED = '#c93636', GREEN = '#0a9e0a', BLACK = '#323433', YELLOW = '#f5c32c';

// x of the n-th trading day
function dayX(i) {
    return 5 + i * 12;
}

// early holds "day:y" pairs, then daily values follow from day `start`
function line(early, start, daily, color, width) {
    var pts = early.split(' ').map(function (p) {
        var a = p.split(':');
        return dayX(+a[0]) + ',' + a[1];
    });
    daily.forEach(function (y, n) {
        pts.push(dayX(start + n) + ',' + y);
    });
    return '<polyline fill="none" stroke-linejoin="round" stroke="' + color + '" stroke-width="' + (width || 3) + '" points="' + pts.join(' ') + '"/>';
}

function box(i, top, bottom, color, hollow) {
    if (hollow) {
        return '<rect x="' + (dayX(i) - 5) + '" y="' + (top + 1) + '" width="11" height="' + (bottom - top - 2) + '" fill="#fefefe" stroke="' + color + '" stroke-width="3"/>';
    }
    return '<rect x="' + (dayX(i) - 5) + '" y="' + top + '" width="11" height="' + (bottom - top) + '" fill="' + color + '"/>';
}

// day, colour, hollow, high, body top, body bottom, low
var candles = [
    [0,'r',0,345,347,350,352],[1,'r',0,345,347,350,352],[2,'r',0,342,346,350,352],[3,'r',0,341,344,350,351],[4,'r',0,337,343,348,350],[5,'r',0,342,344,348,350],[6,'r',0,341,343,347,350],[7,'r',0,342,344,349,350],
    [9,'g',0,354,355,359,362],[10,'g',0,353,355,358,360],[11,'g',0,354,356,359,360],[13,'g',0,362,363,391,392],[14,'g',1,378,379,391,391],[15,'g',1,372,375,387,392],[16,'g',0,372,374,378,380],
    [18,'g',0,374,376,379,380],[20,'g',0,374,375,379,381],[22,'r',1,347,348,370,377],[23,'r',0,346,350,360,364],[24,'r',1,355,359,370,372],[26,'g',0,374,375,378,380],[27,'r',0,366,368,376,378],[28,'r',0,362,365,370,374],[29,'r',0,356,361,368,372],[30,'r',0,360,362,365,366],[31,'r',0,358,360,364,365],
    [32,'r',1,342,347,360,363],[33,'r',0,346,349,352,354],[34,'r',1,340,345,352,353],[35,'r',0,342,344,350,352],[36,'r',0,342,344,350,352],[37,'r',0,343,344,350,353],[38,'r',0,346,347,350,351],[40,'r',0,341,342,346,348],[41,'r',0,341,342,347,348],[42,'r',0,341,343,346,348],[44,'r',0,346,348,352,353],[45,'r',0,348,350,355,358],[46,'r',0,345,347,354,357],[47,'r',0,345,347,350,352],[49,'r',0,344,346,349,350],
    [51,'r',1,335,336,347,348],[52,'r',0,335,341,347,348],[53,'r',0,340,342,346,348],[54,'r',0,343,345,348,349],[57,'r',0,344,345,350,352],
    [58,'r',1,312,312,351,352],[59,'r',0,318,321,329,331],[60,'r',1,289,289,329,330],[61,'r',1,247,277,289,294],[62,'r',0,279,285,296,306],[63,'r',0,300,302,314,316],[64,'r',1,285,293,313,315],[65,'r',0,296,300,316,319],[66,'r',1,274,283,303,307],[67,'r',1,264,277,287,297],[68,'r',1,232,233,278,282],
    [69,'r',0,184,184,187,187],[70,'r',0,131,131,134,134],[71,'r',0,75,106,156,160],
    [72,'g',0,158,188,198,208],[73,'g',1,147,157,203,204],[74,'g',0,150,168,179,190],[75,'g',0,168,171,178,182],[76,'g',0,156,171,178,183],[77,'g',1,127,128,187,200],[78,'g',0,138,157,167,172],[79,'g',0,163,168,179,179],[80,'g',0,181,185,197,199],[81,'g',0,190,193,197,199],[82,'g',1,186,188,200,201],[83,'g',0,171,177,185,190],[84,'g',1,161,166,179,181],[85,'g',0,164,171,177,183],[86,'g',0,168,180,196,198],[87,'g',1,171,172,198,200],[88,'g',0,168,172,180,182],[89,'g',0,165,170,178,182],[90,'g',0,168,169,178,181],
    [91,'r',1,149,153,172,174],[92,'r',0,152,157,168,171],[93,'r',1,112,143,167,178],[94,'r',1,87,99,147,150],[95,'r',0,99,113,131,138],[96,'r',0,113,123,137,138],[97,'r',1,63,64,135,143],[98,'r',1,0,1,39,44]
];

document.getElementById('candles').innerHTML = candles.map(function (c) {
    var color = c[1] === 'r' ? RED : GREEN;
    return '<path stroke="' + color + '" stroke-width="4" d="M' + dayX(c[0]) + ' ' + c[3] + 'V' + c[6] + '"/>' + box(c[0], c[4], c[5], color, c[2]);
}).join('');

document.getElementById('kLines').innerHTML =
    line('0:352 3:347 8:345 10:350 12:356 14:367 17:376 20:372 25:376 29:367 33:359 36:350 44:346 49:347 52:343 55:343 57:346', 58,
        [342,336,326,312,301,301,293,296,297,296,280,259,219,196,179,167,165,171,177,166,166,168,171,174,186,188,186,184,182,180,180,180,177,171,168,161,147,139,133,114,83], BLACK, 4) +
    line('0:354 8:346 12:351 14:356 17:369 20:374 27:377 32:373 36:360 40:349 50:348 57:345 59:339 60:333 62:324 64:317 66:307 68:291 70:259 71:247 72:237 73:223 75:199 76:187 77:172 78:166 79:164 80:169 82:175 85:176 88:182 90:182 91:179 93:168 95:158 96:152 97:143 98:124', 0, [], '#ffbc45', 4) +
    line('0:354 12:353 22:359 30:370 38:368 49:355 57:345 60:341 64:334 67:327 69:319 71:299 73:286 76:266 78:251 80:239 82:226 84:213 86:204 88:192 90:181 92:173 94:168 96:167 97:163 98:156', 0, [], '#cf1f86', 5) +
    line('0:357 5:355 12:353 20:357 27:362 33:366 38:366 49:358 57:349 60:343 64:336 67:330 69:323 71:310 73:299 76:279 78:266 81:249 84:229 88:209 92:192 94:184 96:172 98:157', 0, [], '#0f9d14', 5);

var macd = [8,8,9,9,7,6,5,4,3,0,-2,-3,-5,-13,-17,-14,-11,-9,-8,-6,-5,-4,-3,-2,-1,-1,-1,0,4,8,8,10,14,17,18,18,16,16,12,11,11,10,8,4,1,-1,0,-1,-1,-1,-1,1,1,1,1,-1,-3,-4,6,7,18,30,28,21,20,15,16,18,30,50,75,79,63,61,50,38,26,31,19,6,-9,-21,-25,-27,-24,-25,-32,-28,-28,-25,-23,-17,-17,-11,6,7,8,23,50];

document.getElementById('macd').innerHTML = macd.map(function (v, i) {
    return '<path stroke-width="3" stroke="' + (v > 0 ? '#cc5252' : '#35a535') + '" d="M' + dayX(i) + ' 108v' + (-v) + '"/>';
}).join('') +
    line('0:107 3:104 8:103 10:108 12:110 14:120 16:121 24:122 27:121 29:116 31:112 34:104 38:97 41:94 43:95 45:98 48:99', 49,
        [99,100,98,98,98,98,99,100,102,96,94,86,78,75,76,74,75,72,68,58,41,21,9,9,3,1,3,6,0,3,9,17,26,32,36,37,41,48,50,53,55,56,56,58,56,47,46,45,34,15], BLACK) +
    line('0:111 3:107 8:103 12:106 14:111 18:118 24:120 28:120 31:117 35:109 39:103 43:98 48:99', 49,
        [99,99,99,99,99,99,99,100,100,99,98,95,92,89,86,84,82,80,77,73,67,58,48,40,32,26,22,19,15,12,12,13,16,19,22,25,28,32,36,40,43,46,48,50,51,50,50,49,46,40], YELLOW, 4);

document.getElementById('dpo').innerHTML =
    line('0:114 5:114 8:115 9:120 12:119 13:138 15:130 17:131 22:132 25:130 27:130 29:121 30:123 32:112 35:107 38:106 40:102 42:105 44:110 46:109', 49,
        [110,110,105,110,110,111,113,115,117,97,105,84,78,88,99,90,94,82,78,55,28,0,14,39,19,27,33,36,8,32,42,55,61,63,61,60,72,85,77,86,87,90,83,93,84,62,82,83,51,18], BLACK) +
    line('0:117 6:113 12:117 13:122 15:128 20:131 26:131 30:127 34:116 37:109 41:105 45:107 48:109', 49,
        [108,108,108,109,109,109,110,111,112,111,110,105,100,95,92,91,89,89,89,83,72,57,43,36,25,21,22,27,26,26,30,34,39,43,52,58,63,67,69,74,79,84,85,86,86,83,82,82,76,64], YELLOW, 4);

// volume: minus sign marks a falling day
var volume = [-5,5,8,10,-4,6,5,-4,-4,4,3,-4,-4,-12,8,8,7,5,4,-3,-3,4,3,4,5,4,4,5,8,9,-5,5,15,-5,6,6,-6,4,-5,4,5,-4,4,3,-3,4,3,-3,4,-4,5,12,-4,4,5,-4,4,-3,36,-37,60,76,-47,-30,37,-35,42,42,53,6,4,-139,-84,100,-66,-42,-49,90,-75,-36,-29,-24,28,30,34,-33,-30,32,-19,26,23,44,-32,73,81,-61,39,69,87];

document.getElementById('volume').innerHTML =
    '<rect x="1176" y="10" width="11" height="42" fill="none" stroke="' + YELLOW + '" stroke-width="3" stroke-dasharray="12 4"/>' +
    volume.map(function (v, i) {
        return v < 0 ? box(i, 139 + v, 140, GREEN) : box(i, 139 - v, 140, RED, v > 5);
    }).join('') +
    line('0:134 3:133 15:131 25:137 31:135 35:132 40:136 50:135 56:134', 57,
        [134,128,120,111,96,87,88,88,93,99,101,96,103,109,90,81,72,59,52,68,69,72,79,83,87,98,108,109,109,107,106,108,109,110,109,109,98,88,79,81,75,71], YELLOW) +
    line('0:133 30:134 57:134 60:131 64:128 69:126 70:125 73:121 77:117 80:115 85:113 90:111 94:109 98:104', 0, [], '#d42bdc', 4);

document.getElementById('fund').innerHTML =
    line('0:78 10:77 18:78 30:77 40:76 57:76 58:81 60:76 62:74 65:77 68:81 70:81 71:104 72:106 73:102 75:102 76:106 77:98 78:97 80:101 84:97 86:100 88:97 90:95 92:90 93:92 94:99 95:95 96:96 97:102 98:107', 0, [], YELLOW) +
    line('0:68 10:67 15:70 22:69 40:71 48:70 51:68 57:68 58:75 59:67 60:73 61:78 62:79 67:77 68:90 70:92 71:74 72:78 73:96 74:92 75:94 76:95 77:107 78:103 84:102 85:101 92:103 93:117 94:119 95:121 96:122 97:133 98:139', 0, [], '#3b74b9') +
    line('0:75 6:72 10:75 14:76 26:75 28:74 30:78 32:73 34:77 44:79 48:80', 57,
        [80,52,68,62,61,65,68,68,72,71,71,38,36,33,85,83,61,71,74,77,51,69,74,80,79,76,76,76,78,81,74,76,77,76,71,76,49,38,51,51,19,9], RED) +
    line('0:66 4:69 9:67 12:66 14:60 17:61 28:63 32:66 37:62 48:60 51:63 54:64', 57,
        [64,75,69,77,70,67,64,63,59,60,58,74,77,79,21,18,25,18,12,7,27,14,9,0,2,5,6,10,6,1,10,8,8,9,17,16,27,28,16,15,30,28], '#159a1a');

// QR modules
function ring(x, y, cx, cy) {
    return Math.max(Math.abs(x - cx), Math.abs(y - cy));
}

function qrPath(size) {
    var seed = 20250808, d = '';
    for (var y = 0; y < size; y++) {
        for (var x = 0; x < size; x++) {
            seed = (seed * 1103515245 + 12345) % 2147483648;
            var on = (seed >> 12) % 100 < 50;
            [[3, 3], [size - 4, 3], [3, size - 4]].forEach(function (f) {
                var r = ring(x, y, f[0], f[1]);
                if (r <= 4) on = r !== 4 && r !== 2;
            });
            [[28, 6], [6, 28], [50, 28], [28, 50], [50, 50]].forEach(function (f) {
                var r = ring(x, y, f[0], f[1]);
                if (r <= 2) on = r !== 1;
            });
            if (on) d += 'M' + x + ' ' + y + 'h1v1h-1z';
        }
    }
    return d;
}

document.getElementById('qr').setAttribute('d', qrPath(57));
```
